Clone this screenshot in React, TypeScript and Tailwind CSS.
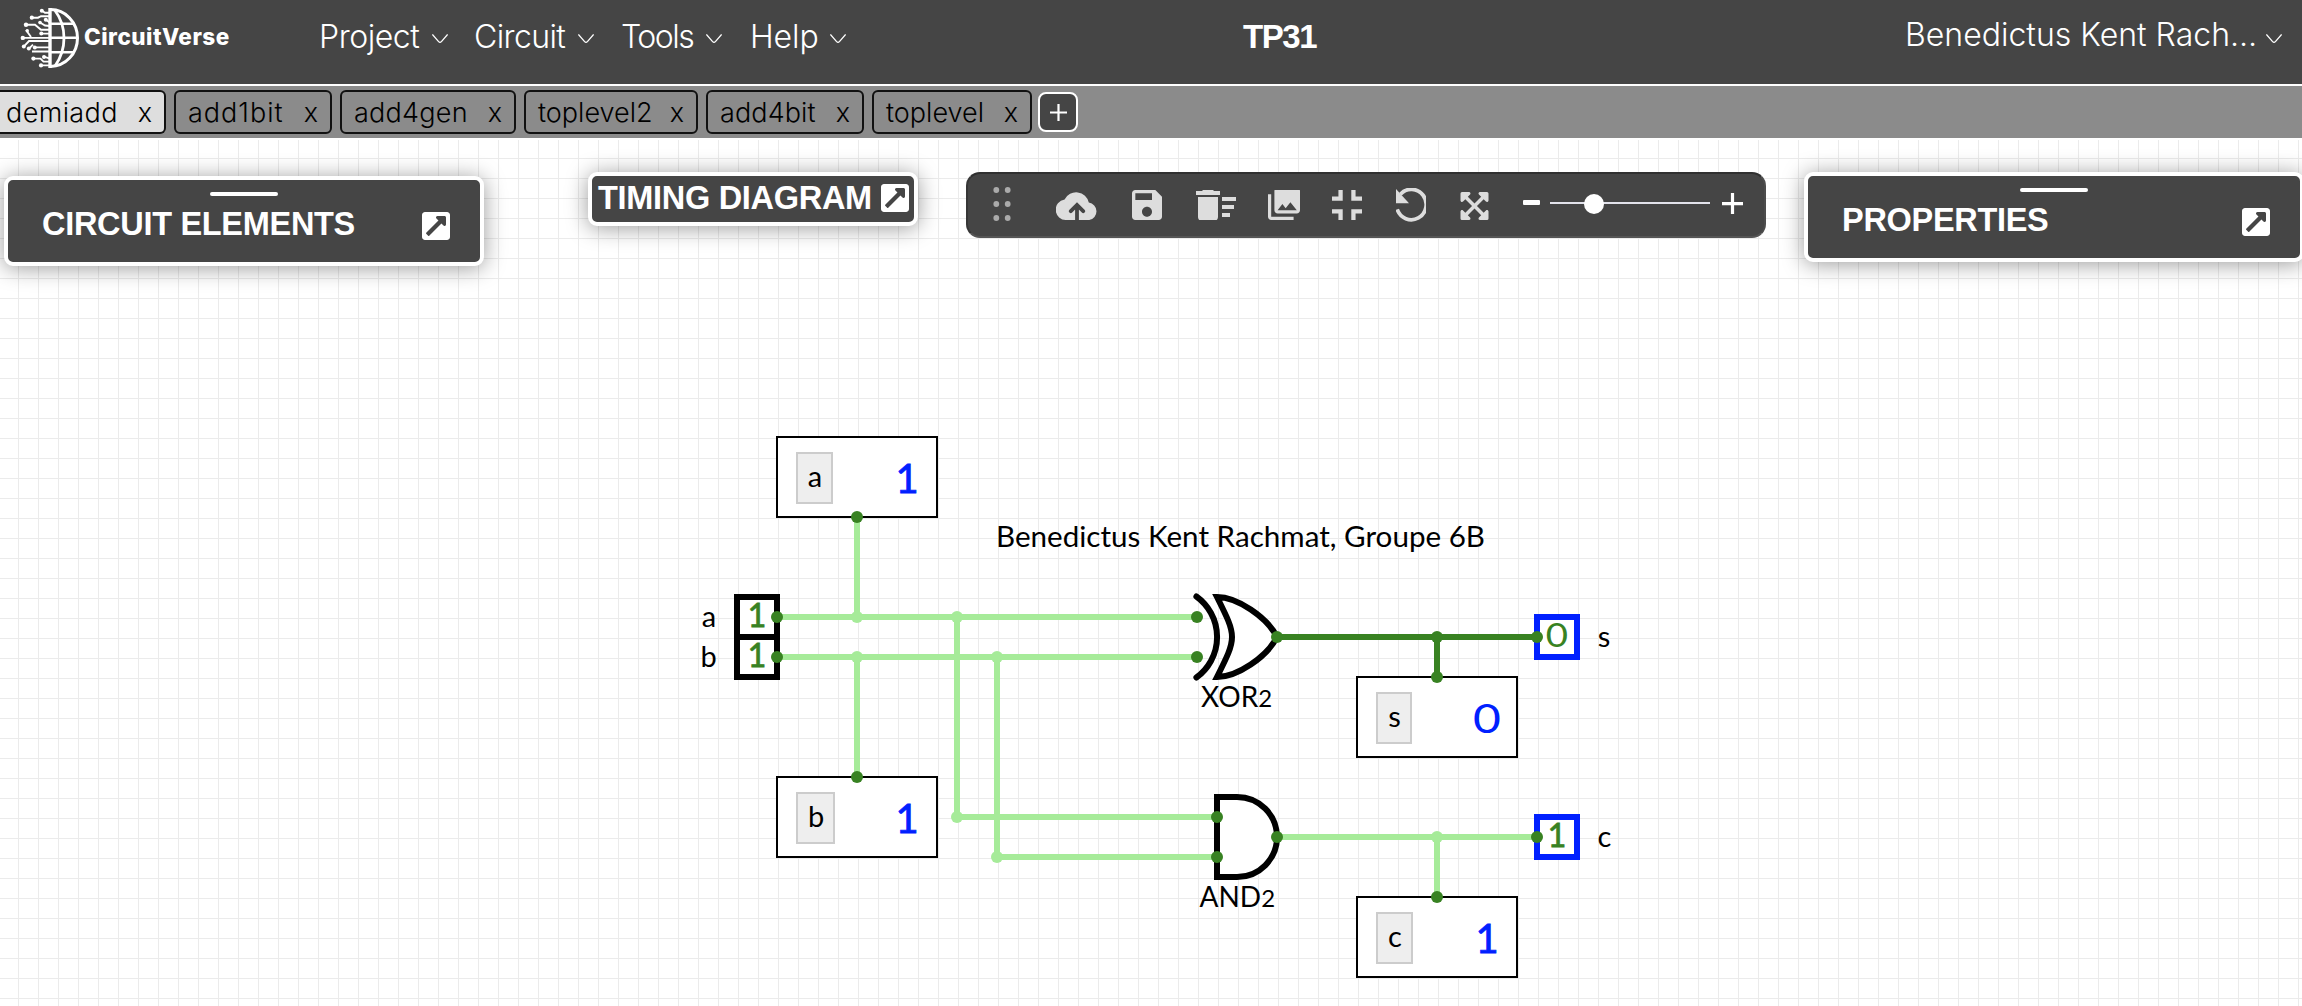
import React from 'react';
import { FaExpandArrowsAlt, FaExternalLinkSquareAlt } from 'react-icons/fa';

const LIGHT = '#a6eb99';
const DARK = '#388222';
const BLUE = '#0020ff';

function Chevron() {
  return (
    <svg className="mt-[33px] h-[11px] w-4 shrink-0" viewBox="0 0 16 11" fill="none" stroke="#fff" strokeWidth="1.3">
      <path d="M.4 1.4 6.6 8.6Q8 10 9.4 8.6L15.6 1.4" />
    </svg>
  );
}

function Logo() {
  return (
    <div className="flex w-[319px] shrink-0 items-start pl-5">
      <svg className="mt-2 h-[60px] w-[60px]" viewBox="20 8 60 60" fill="none" stroke="#fff">
        <g strokeWidth="3">
          <path d="M50 8v60" strokeWidth="3.4" />
          <path d="M49 9.6h1.5a27 28.4 0 0 1 0 56.8H49" />
          <path d="M55 10.5c12 16 12 39 0 55.5" strokeWidth="2.8" />
          <path d="M50 23.8h24M50 37.8h28M50 52.3h24" strokeWidth="2.6" />
        </g>
        <g strokeWidth="1.9">
          <path d="M42 10.7l3 2h5M32 17.7h6l3-1.5h9M46 19.7l4 3M40 22.5l5 3 5 .5M26 24.7h9l6 5h9M41.5 33.6h8.5" />
          <path d="M26 30l5 7M23 37.9h27M24 46.3l5-5.3h21M29 48.6l4-4M35 47.4h15M32 51.5h18M33.5 58.6h7l3 3h6.5M44 56.7l6 2M41 65.4h9" />
        </g>
        <g fill="#fff" stroke="none">
          <circle cx="41.8" cy="10.7" r="2" />
          <circle cx="31.8" cy="17.7" r="2.1" />
          <circle cx="45.8" cy="19.7" r="2" />
          <circle cx="40" cy="22.6" r="1.8" />
          <circle cx="26" cy="24.7" r="2.2" />
          <circle cx="27.3" cy="30.8" r="1.7" />
          <circle cx="22.8" cy="37.9" r="2.2" />
          <circle cx="23.8" cy="46.4" r="2" />
          <circle cx="28.8" cy="48.6" r="2" />
          <circle cx="34.8" cy="47.4" r="2" />
          <circle cx="41.3" cy="33.6" r="2" />
          <circle cx="33.4" cy="58.6" r="2.1" />
          <circle cx="44" cy="56.9" r="2" />
          <circle cx="41" cy="65.4" r="2.1" />
        </g>
      </svg>
      <span className="mt-[26px] pl-1 text-[22.5px] leading-none font-extrabold tracking-[0.5px]">CircuitVerse</span>
    </div>
  );
}

function Header() {
  return (
    <header className="flex h-[86px] items-start border-b-2 border-white bg-[#454545] text-[32px] leading-none font-[340] whitespace-nowrap text-white">
      <Logo />
      <nav className="flex items-start">
        <span className="mt-[21px] w-[113px] tracking-[-0.45px]">Project</span>
        <Chevron />
        <span className="mt-[21px] ml-[26px] w-[104px] tracking-[-0.6px]">Circuit</span>
        <Chevron />
        <span className="mt-[21px] ml-[27px] w-[85px] tracking-[-1.5px]">Tools</span>
        <Chevron />
        <span className="mt-[21px] ml-[28px] w-20 tracking-[-0.1px]">Help</span>
        <Chevron />
      </nav>
      <h1 className="mt-5 ml-[397px] w-[662px] font-['Liberation_Sans',Arial,sans-serif] text-[33px] leading-none font-bold tracking-[-1.4px]">
        TP31
      </h1>
      <div className="flex items-start">
        <span className="mt-[19px] w-[361px]">Benedictus Kent Rach…</span>
        <Chevron />
      </div>
    </header>
  );
}

const tabs = [
  { name: 'demiadd', style: '-ml-1 w-[170px] rounded-r-md border-l-0 bg-[#dedede] pl-[10px]', text: 'tracking-[0.4px]' },
  { name: 'add1bit', style: 'w-[158px] rounded-md pl-3', text: 'tracking-[1px]' },
  { name: 'add4gen', style: 'w-[176px] rounded-md pl-3', text: 'tracking-[0.25px]' },
  { name: 'toplevel2', style: 'w-[174px] rounded-md pl-3', text: '' },
  { name: 'add4bit', style: 'w-[158px] rounded-md pl-3', text: 'tracking-[0.1px]' },
  { name: 'toplevel', style: 'w-[160px] rounded-md pl-3', text: '' },
];

function TabBar() {
  return (
    <div className="flex h-[52px] items-start gap-2 bg-[#8b8b8b] pt-1 text-[27px] leading-none font-[320] text-black">
      {tabs.map((t) => (
        <div key={t.name} className={`flex h-11 shrink-0 items-center justify-between border-2 border-[#111] pr-3 ${t.style}`}>
          <span className={t.text}>{t.name}</span>
          <span>x</span>
        </div>
      ))}
      <button className="mt-0.5 -ml-0.5 flex h-10 w-10 items-center justify-center rounded-lg border-2 border-white bg-[#454545]">
        <svg className="h-[17px] w-[17px]" viewBox="0 0 17 17" stroke="#fff" strokeWidth="2.2">
          <path d="M8.5 0v17M0 8.5h17" />
        </svg>
      </button>
    </div>
  );
}

function Panel({ title, className, titleClass }: { title: string; className: string; titleClass: string }) {
  return (
    <section className={`flex h-[90px] shrink-0 flex-col rounded-[9px] border-4 border-white bg-[#454545] text-white shadow-[0_2px_22px_rgba(0,0,0,0.4)] ${className}`}>
      <div className="mt-3 h-1 w-[68px] self-center rounded-sm bg-white" />
      <div className={`mt-3 flex items-start justify-between ${titleClass}`}>
        <h2 className="font-['Liberation_Sans',Arial,sans-serif] text-[32.5px] leading-none font-bold tracking-[-0.3px]">{title}</h2>
        <FaExternalLinkSquareAlt className="mt-[2px] h-8 w-7" />
      </div>
    </section>
  );
}

function TimingPanel() {
  return (
    <section className="mt-8 ml-[104px] flex h-[54px] w-[330px] shrink-0 items-start rounded-[9px] border-4 border-white bg-[#454545] text-white shadow-[0_2px_22px_rgba(0,0,0,0.4)]">
      <h2 className="mt-[6px] ml-[6px] w-[283px] font-['Liberation_Sans',Arial,sans-serif] text-[32.5px] leading-none font-bold tracking-[-0.3px] whitespace-nowrap">
        TIMING DIAGRAM
      </h2>
      <FaExternalLinkSquareAlt className="mt-[6px] h-8 w-7" />
    </section>
  );
}

function Toolbar() {
  return (
    <div className="mt-8 ml-12 flex h-[66px] w-[800px] shrink-0 items-start rounded-[14px] border-2 border-t-[#303030] border-r-[#4c4c4c] border-b-[#555] border-l-[#363636] bg-[#454545] fill-[#ddd] text-[#ddd] *:shrink-0">
      <svg className="mt-[13px] ml-[25px] h-[34px] w-[18px] fill-[#aaa]" viewBox="0 0 18 34">
        {[3, 17, 31].map((y) => (
          <g key={y}>
            <circle cx="3.3" cy={y} r="2.9" />
            <circle cx="14.7" cy={y} r="2.9" />
          </g>
        ))}
      </svg>
      <svg className="mt-4 ml-[45px] h-[30px] w-[42px]" viewBox="0 0 42 30">
        <path d="M10.3 30A10.3 10.3 0 0 1 8.6 9.5 12.9 12.9 0 0 1 32.8 12.6 8.8 8.8 0 0 1 33.2 30Z" />
        <path d="M14.8 21.2 21 15l6.2 6.2M21 15.5V30" fill="none" stroke="#454545" strokeWidth="3.8" strokeLinecap="round" />
      </svg>
      <svg className="mt-4 ml-[34px] h-[30px] w-[30px]" viewBox="3 3 18 18">
        <path d="M17 3H5c-1.11 0-2 .9-2 2v14c0 1.1.89 2 2 2h14c1.1 0 2-.9 2-2V7l-4-4zm-5 16c-1.66 0-3-1.34-3-3s1.34-3 3-3 3 1.34 3 3-1.34 3-3 3zm3-10H5V5h10v4z" />
      </svg>
      <svg className="mt-4 ml-[34px] h-[30px] w-[40px]" viewBox="2 4.5 20 15">
        <path d="M15 16h4v2h-4zm0-8h7v2h-7zm0 4h6v2h-6zM3 18c0 1.1.9 2 2 2h6c1.1 0 2-.9 2-2V8H3v10zM14 5h-3l-1-1H6L5 5H2v2h12z" />
      </svg>
      <svg className="mt-4 ml-8 h-[30px] w-8" viewBox="2 3.4 20 18.6">
        <path d="M22 16V4c0-1.1-.9-2-2-2H8c-1.1 0-2 .9-2 2v12c0 1.1.9 2 2 2h12c1.1 0 2-.9 2-2zm-11-4l2.03 2.71L16 11l4 5H8l3-4zM2 6v14c0 1.1.9 2 2 2h14v-2H4V6H2z" />
      </svg>
      <svg className="mt-4 ml-8 h-[30px] w-[30px]" viewBox="5 5 14 14">
        <path d="M5 16h3v3h2v-5H5v2zm3-8H5v2h5V5H8v3zm6 11h2v-3h3v-2h-5v5zm2-11V5h-2v5h5V8h-3z" />
      </svg>
      <svg className="mt-3.5 ml-[34px] h-[34px] w-[30px]" viewBox="0 0 30 34">
        <path d="M1.2 21.4A14.9 15.2 0 1 0 4.4 6.2" fill="none" stroke="#ddd" strokeWidth="3.8" />
        <path d="M0 1v14.2h13Z" />
      </svg>
      <FaExpandArrowsAlt className="mt-4 ml-[34px] h-[32px] w-[29px]" />
      <svg className="mt-[26px] ml-[34px] h-[5px] w-[17px]" viewBox="0 0 17 5">
        <rect width="17" height="5" rx="1" fill="#fff" />
      </svg>
      <div className="relative mt-7 ml-2.5 h-0.5 w-40 bg-[#e3e3ec]">
        <div className="absolute top-[-8px] left-[34px] h-5 w-5 rounded-full bg-white" />
      </div>
      <svg className="mt-[19px] ml-3 h-[21px] w-[21px]" viewBox="0 0 21 21" stroke="#fff" strokeWidth="3.2">
        <path d="M10.5 0v21M0 10.7h21" />
      </svg>
    </div>
  );
}

function Digit({ x, y, size, value, fill }: { x: number; y: number; size: number; value: string; fill: string }) {
  const stretch = value === '0' ? 1.2 : 1;
  return (
    <text
      transform={`translate(${x} ${y}) scale(${stretch} 1)`}
      fontSize={size}
      fill={fill}
      stroke={fill}
      strokeWidth={value === '0' ? 0 : 0.8}
      textAnchor="middle"
    >
      {value}
    </text>
  );
}

function Flag({ x, y, w, label, value }: { x: number; y: number; w: number; label: string; value: string }) {
  return (
    <g>
      <rect x={x} y={y} width="160" height="80" fill="#fff" stroke="#000" strokeWidth="2" />
      <rect x={x + 20} y={y + 16} width={w} height="50" fill="#eee" stroke="#ccc" strokeWidth="2" />
      <text x={x + 20 + w / 2 + 0.5} y={y + 50} fontSize="29" textAnchor="middle">{label}</text>
      <Digit x={x + 130} y={y + 56} size={40} value={value} fill={BLUE} />
    </g>
  );
}

function Pin({ x, y, stroke, value }: { x: number; y: number; stroke: string; value: string }) {
  return (
    <g>
      <rect x={x} y={y} width="40" height="40" fill="#fff" stroke={stroke} strokeWidth="6" />
      <Digit x={x + 20} y={y + 29.8} size={32} value={value} fill={DARK} />
    </g>
  );
}

const lightJoints = [[857, 617], [857, 657], [957, 617], [997, 657], [957, 817], [997, 857], [1437, 837]];
const darkJoints = [
  [857, 517], [857, 777], [777, 617], [777, 657], [1197, 617], [1197, 657], [1277, 637], [1437, 637],
  [1437, 677], [1537, 637], [1217, 817], [1217, 857], [1277, 837], [1437, 897], [1537, 837],
];

function Circuit() {
  return (
    <svg className="col-start-1 row-start-1 h-[866px] w-[2302px] font-[Lato,sans-serif]" viewBox="0 140 2302 866">
      <Pin x={737} y={597} stroke="#000" value="1" />
      <Pin x={737} y={637} stroke="#000" value="1" />
      <Pin x={1537} y={617} stroke={BLUE} value="0" />
      <Pin x={1537} y={817} stroke={BLUE} value="1" />
      <Flag x={777} y={437} w={35} label="a" value="1" />
      <Flag x={777} y={777} w={37} label="b" value="1" />
      <Flag x={1357} y={677} w={34} label="s" value="0" />
      <Flag x={1357} y={897} w={35} label="c" value="1" />
      <g fill="#fff" stroke="#000" strokeWidth="6">
        <path d="M1217 597C1237 597 1267 617 1277 637 1267 657 1237 677 1217 677 1237 637 1237 637 1217 597Z" />
        <path d="M1196.4 596.5A50 50 0 0 1 1196.4 677.5" fill="none" strokeLinecap="round" />
        <path d="M1217 797H1237A40 40 0 0 1 1237 877H1217Z" />
      </g>
      <g fill="none" strokeWidth="6">
        <path d="M777 617H1197M777 657H1197M857 517V617M857 657V777M957 617V817H1217M997 657V857H1217M1277 837H1537M1437 837V897" stroke={LIGHT} />
        <path d="M1277 637H1537M1437 637V677" stroke={DARK} />
      </g>
      {lightJoints.map(([x, y]) => <circle key={`${x}-${y}`} cx={x} cy={y} r="6" fill={LIGHT} />)}
      {darkJoints.map(([x, y]) => <circle key={`${x}-${y}`} cx={x} cy={y} r="6" fill={DARK} />)}
      <g fontSize="29" fill="#000">
        <text x="709" y="627" textAnchor="middle">a</text>
        <text x="708.5" y="667" textAnchor="middle">b</text>
        <text x="1604" y="647" textAnchor="middle">s</text>
        <text x="1604.5" y="847" textAnchor="middle">c</text>
      </g>
      <g fontSize="28" fill="#000">
        <text x="996" y="547" textLength="489" lengthAdjust="spacingAndGlyphs">Benedictus Kent Rachmat, Groupe 6B</text>
        <text x="1201" y="707">XOR<tspan fontSize="24">2</tspan></text>
        <text x="1199.5" y="907">AND<tspan fontSize="24">2</tspan></text>
      </g>
    </svg>
  );
}

export default function App() {
  return (
    <div className="h-[1006px] w-[2302px] overflow-hidden bg-white font-[Inter,'Liberation_Sans',sans-serif]">
      <Header />
      <TabBar />
      <main className="mt-0.5 grid h-[866px] overflow-hidden bg-[linear-gradient(to_right,transparent_18px,#ebebeb_18px,#ebebeb_19px,transparent_19px),linear-gradient(to_bottom,transparent_18px,#ebebeb_18px,#ebebeb_19px,transparent_19px)] bg-[size:20px_20px]">
        <Circuit />
        <div className="z-10 col-start-1 row-start-1 flex items-start">
          <Panel title="CIRCUIT ELEMENTS" className="mt-9 ml-1 w-[480px]" titleClass="ml-[34px] mr-[30px]" />
          <TimingPanel />
          <Toolbar />
          <Panel title="PROPERTIES" className="mt-8 ml-[38px] w-[500px]" titleClass="ml-[34px] mr-[30px]" />
        </div>
      </main>
    </div>
  );
}
